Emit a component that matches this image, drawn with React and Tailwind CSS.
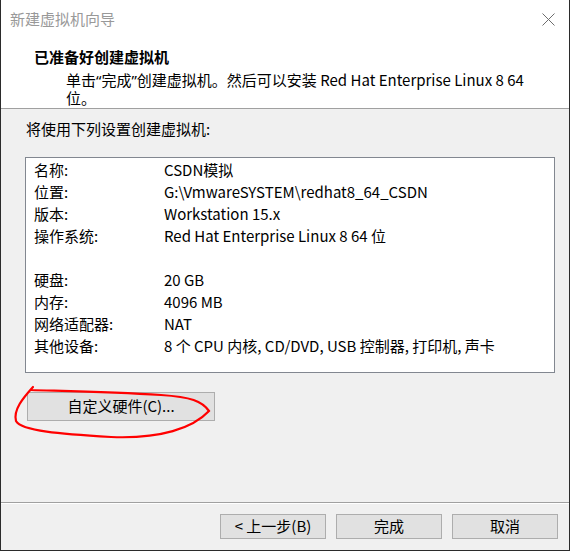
import React from 'react'

const font = { fontFamily: '"Noto Sans CJK SC", "Noto Sans", sans-serif' }
const latin = { fontFamily: '"Noto Sans", sans-serif' }

const rows = [
  ['名称:', 'CSDN模拟'],
  ['位置:', 'G:\\VmwareSYSTEM\\redhat8_64_CSDN'],
  ['版本:', 'Workstation 15.x'],
  ['操作系统:', 'Red Hat Enterprise Linux 8 64 位'],
  ['', ''],
  ['硬盘:', '20 GB'],
  ['内存:', '4096 MB'],
  ['网络适配器:', 'NAT'],
  ['其他设备:', '8 个 CPU 内核, CD/DVD, USB 控制器, 打印机, 声卡'],
]

function Btn({children, className}){
  return (
    <div className={"h-[25px] w-[106px] bg-[#e1e1e1] border border-[#adadad] flex items-center justify-center text-[15px] text-black " + (className||'')}>
      {children}
    </div>
  )
}

export default function App(){
  return (
    <div style={font} className="relative w-[570px] h-[551px] bg-[#f0f0f0] border-l border-r border-b border-[#2b2b2b] flex flex-col text-black overflow-hidden">
      <header className="h-[109px] bg-white border-b border-[#a0a0a0] shrink-0">
        <div className="h-[38px] flex items-center justify-between pl-[9px] pr-[14px]">
          <span className="text-[15px] text-[#999]">新建虚拟机向导</span>
          <svg width="13" height="13" viewBox="0 0 13 13">
            <path d="M0.5 0.5 L12.5 12.5 M12.5 0.5 L0.5 12.5" stroke="#6d6d6d" strokeWidth="1" />
          </svg>
        </div>
        <div className="mt-[9px] pl-[33px] text-[15px] font-bold leading-[20px]">已准备好创建虚拟机</div>
        <div className="mt-[4px] pl-[65px] text-[15px] leading-[18px]">
          单击<span style={latin}>“</span>完成<span style={latin}>”</span>创建虚拟机。然后可以安装 Red Hat Enterprise Linux 8 64<br/>位。
        </div>
      </header>

      <main className="flex-1 pt-[10px] pl-[24px] pr-[14px]">
        <div className="text-[15px] leading-[20px] pl-[1px]">将使用下列设置创建虚拟机:</div>
        <div className="mt-[18px] h-[216px] bg-white border border-[#828790] pt-[1px] pl-[8px]">
          {rows.map((r, i) => (
            <div key={i} className="flex h-[22px] items-center text-[15px]">
              <span className="w-[130px]">{r[0]}</span>
              <span>{r[1]}</span>
            </div>
          ))}
        </div>
        <div className="mt-[19px] ml-[2px] w-[188px] h-[29px] bg-[#e1e1e1] border border-[#adadad] flex items-center justify-center text-[15px]">
          自定义硬件(C)...
        </div>
      </main>

      <footer className="h-[48px] shrink-0 border-t border-[#a0a0a0]">
        <div className="border-t border-white h-full flex justify-end gap-[10px] pt-[10px] pr-[11px]">
          <Btn>&lt; 上一步(B)</Btn>
          <Btn>完成</Btn>
          <Btn>取消</Btn>
        </div>
      </footer>

      <svg className="absolute left-0 top-0 pointer-events-none" width="570" height="551" viewBox="0 0 570 551">
        <path d="M32 387 C 22 398, 12 410, 15 421 C 20 431, 60 434, 110 437 C 160 439, 192 428, 208 411 C 201 401, 190 397, 160 395 C 110 392, 60 391, 30 390"
          fill="none" stroke="#ff0000" strokeWidth="2.2" strokeLinecap="round" />
      </svg>
    </div>
  )
}
